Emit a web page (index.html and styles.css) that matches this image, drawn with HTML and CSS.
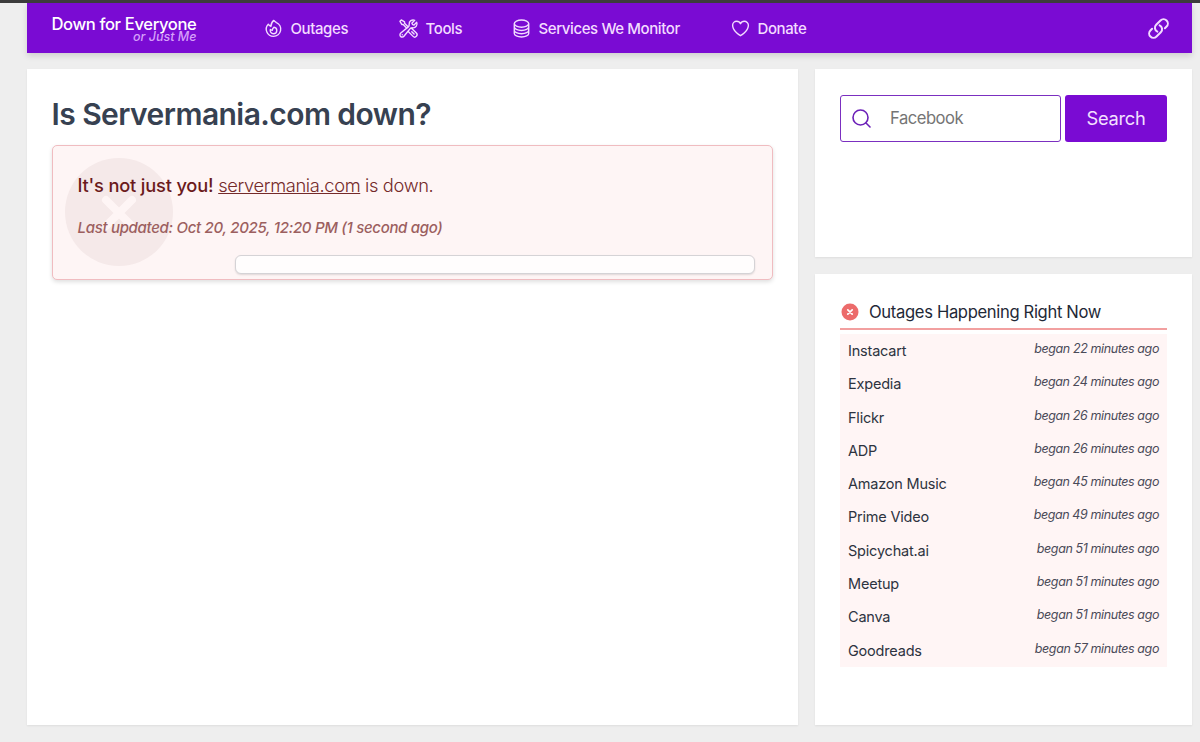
FILE: index.html
```html
<!DOCTYPE html>
<html lang="en">
<head>
    <meta charset="UTF-8">
    <title>Is Servermania.com down?</title>
    <link rel="stylesheet" href="styles.css">
</head>
<body>
    <div class="page">
        <!-- Header -->
        <header class="header">
            <a class="brand">
                <span class="brand-name">Down for Everyone</span>
                <span class="brand-sub">or Just Me</span>
            </a>
            <nav class="nav">
                <a class="nav-item outages">
                    <svg class="icon" viewBox="0 0 24 24"><path d="M15.362 5.214A8.252 8.252 0 0 1 12 21 8.25 8.25 0 0 1 6.038 7.047 8.287 8.287 0 0 0 9 9.601a8.983 8.983 0 0 1 3.361-6.867 8.21 8.21 0 0 0 3 2.48Z"/><path d="M12 18a3.75 3.75 0 0 0 .495-7.468 5.99 5.99 0 0 0-1.925 3.547 5.975 5.975 0 0 1-2.133-1.001A3.75 3.75 0 0 0 12 18Z"/></svg>
                    <span>Outages</span>
                </a>
                <a class="nav-item tools">
                    <svg class="icon" viewBox="0 0 24 24"><path d="M11.42 15.17 17.25 21A2.652 2.652 0 0 0 21 17.25l-5.877-5.877M11.42 15.17l2.496-3.03c.317-.384.74-.626 1.208-.766M11.42 15.17l-4.655 5.653a2.548 2.548 0 1 1-3.586-3.586l6.837-5.63m5.108-.233c.55-.164 1.163-.188 1.743-.14a4.5 4.5 0 0 0 4.486-6.336l-3.276 3.277a3.004 3.004 0 0 1-2.25-2.25l3.276-3.276a4.5 4.5 0 0 0-6.336 4.486c.091 1.076-.071 2.264-.904 2.95l-.102.085m-1.745 1.437L5.909 7.5H4.5L2.25 3.75l1.5-1.5L7.5 4.5v1.409l4.26 4.26m-1.745 1.437 1.745-1.437m6.615 8.206L15.75 15.75M4.867 19.125h.008v.008h-.008v-.008Z"/></svg>
                    <span>Tools</span>
                </a>
                <a class="nav-item services">
                    <svg class="icon" viewBox="0 0 24 24"><path d="M20.25 6.375c0 2.278-3.694 4.125-8.25 4.125S3.75 8.653 3.75 6.375m16.5 0c0-2.278-3.694-4.125-8.25-4.125S3.75 4.097 3.75 6.375m16.5 0v11.25c0 2.278-3.694 4.125-8.25 4.125s-8.25-1.847-8.25-4.125V6.375m16.5 3.75c0 2.278-3.694 4.125-8.25 4.125s-8.25-1.847-8.25-4.125m16.5 3.75C20.25 16.153 16.556 18 12 18s-8.25-1.847-8.25-4.125"/></svg>
                    <span>Services We Monitor</span>
                </a>
                <a class="nav-item donate">
                    <svg class="icon" viewBox="0 0 24 24"><path d="M21 8.25c0-2.485-2.099-4.5-4.688-4.5-1.935 0-3.597 1.126-4.312 2.733-.715-1.607-2.377-2.733-4.313-2.733C5.1 3.75 3 5.765 3 8.25c0 7.22 9 12 9 12s9-4.78 9-12Z"/></svg>
                    <span>Donate</span>
                </a>
            </nav>
            <a class="share">
                <svg viewBox="0 0 24 24"><path d="M13.19 8.688a4.5 4.5 0 0 1 1.242 7.244l-4.5 4.5a4.5 4.5 0 0 1-6.364-6.364l1.757-1.757m13.35-.622 1.757-1.757a4.5 4.5 0 0 0-6.364-6.364l-4.5 4.5a4.5 4.5 0 0 0 1.242 7.244"/></svg>
            </a>
        </header>

        <div class="columns">
            <!-- Status -->
            <main class="card main">
                <h1>Is Servermania.com down?</h1>
                <section class="status">
                    <svg class="status-mark" viewBox="0 0 108 108"><circle cx="54" cy="54" r="54"/><path d="M41 42l26 26M67 42L41 68"/></svg>
                    <p class="status-text"><strong>It's not just you!</strong> <a>servermania.com</a> <span>is down.</span></p>
                    <p class="status-time">Last updated: Oct 20, 2025, 12:20 PM (1 second ago)</p>
                    <div class="status-bar"></div>
                </section>
            </main>

            <!-- Sidebar -->
            <aside class="sidebar">
                <div class="card search-card">
                    <form class="search">
                        <label class="search-field">
                            <svg viewBox="0 0 19 19"><circle cx="8.5" cy="8.5" r="7.5"/><path d="M14 14l4 4"/></svg>
                            <input type="text" placeholder="Facebook">
                        </label>
                        <button type="button">Search</button>
                    </form>
                </div>
                <div class="card outages-card">
                    <h2>
                        <svg viewBox="0 0 18 18"><circle cx="9" cy="9" r="8.5"/><path d="M6.8 6.8l4.4 4.4M11.2 6.8l-4.4 4.4"/></svg>
                        <span>Outages Happening Right Now</span>
                    </h2>
                    <ul class="outage-list">
                        <li><a>Instacart</a><em>began 22 minutes ago</em></li>
                        <li><a>Expedia</a><em>began 24 minutes ago</em></li>
                        <li><a>Flickr</a><em>began 26 minutes ago</em></li>
                        <li><a>ADP</a><em>began 26 minutes ago</em></li>
                        <li><a>Amazon Music</a><em>began 45 minutes ago</em></li>
                        <li><a>Prime Video</a><em>began 49 minutes ago</em></li>
                        <li><a>Spicychat.ai</a><em>began 51 minutes ago</em></li>
                        <li><a>Meetup</a><em>began 51 minutes ago</em></li>
                        <li><a>Canva</a><em>began 51 minutes ago</em></li>
                        <li><a>Goodreads</a><em>began 57 minutes ago</em></li>
                    </ul>
                </div>
            </aside>
        </div>
    </div>
</body>
</html>
```
FILE: styles.css
```css
* {
    margin: 0;
    padding: 0;
    box-sizing: border-box;
}

body {
    height: 742px;
    overflow: hidden;
    background: #eeeeee;
    border-top: 3px solid #3c3c3c;
    font-family: Inter, "Liberation Sans", sans-serif;
    color: #2d3748;
}

svg {
    fill: none;
    stroke: currentColor;
    stroke-linecap: round;
    stroke-linejoin: round;
}

.page {
    padding: 0 8px 0 26.5px;
}

/* Header */
.header {
    display: flex;
    align-items: center;
    height: 50px;
    padding: 0 22px 0 25px;
    background: #7a0bd3;
    color: #f3dcff;
    box-shadow: 0 3px 6px rgba(0, 0, 0, 0.13);
}
.brand {
    display: flex;
    flex-direction: column;
    align-items: flex-end;
    width: 145px;
    padding-top: 2px;
    white-space: nowrap;
}
.brand-name {
    font-size: 16.6px;
    line-height: 18px;
    font-weight: 500;
    letter-spacing: -0.36px;
    color: #fff;
}
.brand-sub {
    margin-top: -2px;
    font-size: 12.5px;
    line-height: 12px;
    font-style: italic;
    font-weight: 500;
    color: #d6a0fa;
}
.nav {
    display: flex;
    margin-left: 66.5px;
}
.nav-item {
    display: flex;
    align-items: center;
    font-size: 15px;
    font-weight: 500;
    letter-spacing: -0.4px;
    white-space: nowrap;
}
.icon {
    width: 21px;
    height: 21px;
    margin-right: 6.5px;
    stroke-width: 1.6;
}
.outages {
    width: 135px;
}
.tools {
    width: 113px;
}
.services {
    width: 219px;
}
.share {
    margin-left: auto;
    height: 23px;
}
.share svg {
    width: 23px;
    height: 23px;
    stroke-width: 2.1;
}

/* Layout */
.columns {
    display: flex;
    gap: 17px;
    height: 656px;
    margin-top: 16px;
}
.card {
    background: #fff;
    box-shadow: 0 1px 2px rgba(0, 0, 0, 0.07);
}
.main {
    width: 771.5px;
    padding: 25px;
}
.sidebar {
    display: flex;
    flex-direction: column;
    gap: 17px;
    flex: 1;
}

/* Status */
h1 {
    font-size: 30px;
    line-height: 40px;
    font-weight: 600;
    letter-spacing: -0.56px;
    color: #374151;
    white-space: nowrap;
}
.status {
    position: relative;
    height: 135px;
    margin-top: 11px;
    padding: 26px 17px 0 25px;
    border: 1px solid #f0bcc0;
    border-radius: 5px;
    background: #fef5f5;
    box-shadow: 0 2px 4px rgba(0, 0, 0, 0.13);
    color: #742a2a;
}
.status-mark {
    position: absolute;
    left: 12.5px;
    top: 12px;
    width: 108px;
    height: 108px;
    stroke: #fef5f5;
    stroke-width: 8;
}
.status-mark circle {
    fill: #f5e9e9;
    stroke: none;
}
.status-text,
.status-time {
    position: relative;
    white-space: nowrap;
}
.status-text {
    font-size: 18.3px;
    line-height: 26px;
    font-weight: 300;
    letter-spacing: -0.35px;
}
.status-text strong {
    font-weight: 500;
    letter-spacing: -0.19px;
    color: #6b1a1c;
}
.status-text a {
    text-decoration: underline;
}
.status-time {
    margin-top: 18px;
    font-size: 15px;
    line-height: 23px;
    font-style: italic;
    font-weight: 500;
    letter-spacing: -0.31px;
    color: #9c5f5f;
}
.status-bar {
    width: 520px;
    height: 19px;
    margin: 16px 0 0 auto;
    border: 1px solid #d5d3d6;
    border-radius: 6px;
    background: #fffdfd;
    box-shadow: 0 1px 2px rgba(0, 0, 0, 0.12);
}

/* Search */
.search-card {
    height: 188px;
    padding: 25.6px 25px;
}
.search {
    display: flex;
    gap: 4px;
    height: 47.6px;
}
.search-field {
    display: flex;
    align-items: center;
    width: 221px;
    padding-left: 11px;
    border: 1px solid #7b2fc0;
    border-radius: 3px;
    color: #6c20b8;
}
.search-field svg {
    flex: none;
    width: 19px;
    height: 19px;
    stroke-width: 1.6;
}
.search-field input {
    width: 150px;
    margin-left: 19px;
    border: none;
    outline: none;
    background: none;
    font: 400 16.6px Inter, "Liberation Sans", sans-serif;
    letter-spacing: -0.48px;
}
.search-field input::placeholder {
    color: #757575;
}
.search button {
    flex: 1;
    border: none;
    border-radius: 3px;
    background: #7a0bd3;
    color: #f3e0ff;
    font: 400 18.3px Inter, "Liberation Sans", sans-serif;
    letter-spacing: -0.3px;
}

/* Outages */
.outages-card {
    flex: 1;
    padding: 25px;
}
h2 {
    display: flex;
    align-items: center;
    height: 31px;
    padding: 0 0 4px 1px;
    border-bottom: 2px solid #f2a0a0;
    font-size: 16.6px;
    font-weight: 400;
    letter-spacing: -0.34px;
    color: #1f2937;
    white-space: nowrap;
}
h2 span {
    padding-top: 1px;
}
h2 svg {
    width: 18px;
    height: 18px;
    margin-right: 10px;
    stroke: #fff;
    stroke-width: 1.7;
}
h2 circle {
    fill: #ec6b6b;
    stroke: none;
}
.outage-list {
    margin-top: 4px;
    background: #fff5f5;
    list-style: none;
}
.outage-list li {
    display: flex;
    justify-content: space-between;
    height: 33.3px;
    padding: 0 8px;
    white-space: nowrap;
}
.outage-list a {
    font-size: 14.5px;
    line-height: 34px;
    letter-spacing: -0.2px;
    color: #2d3340;
}
.outage-list em {
    font-size: 12.5px;
    line-height: 30.6px;
    letter-spacing: -0.4px;
    color: #4a4a58;
}
```
